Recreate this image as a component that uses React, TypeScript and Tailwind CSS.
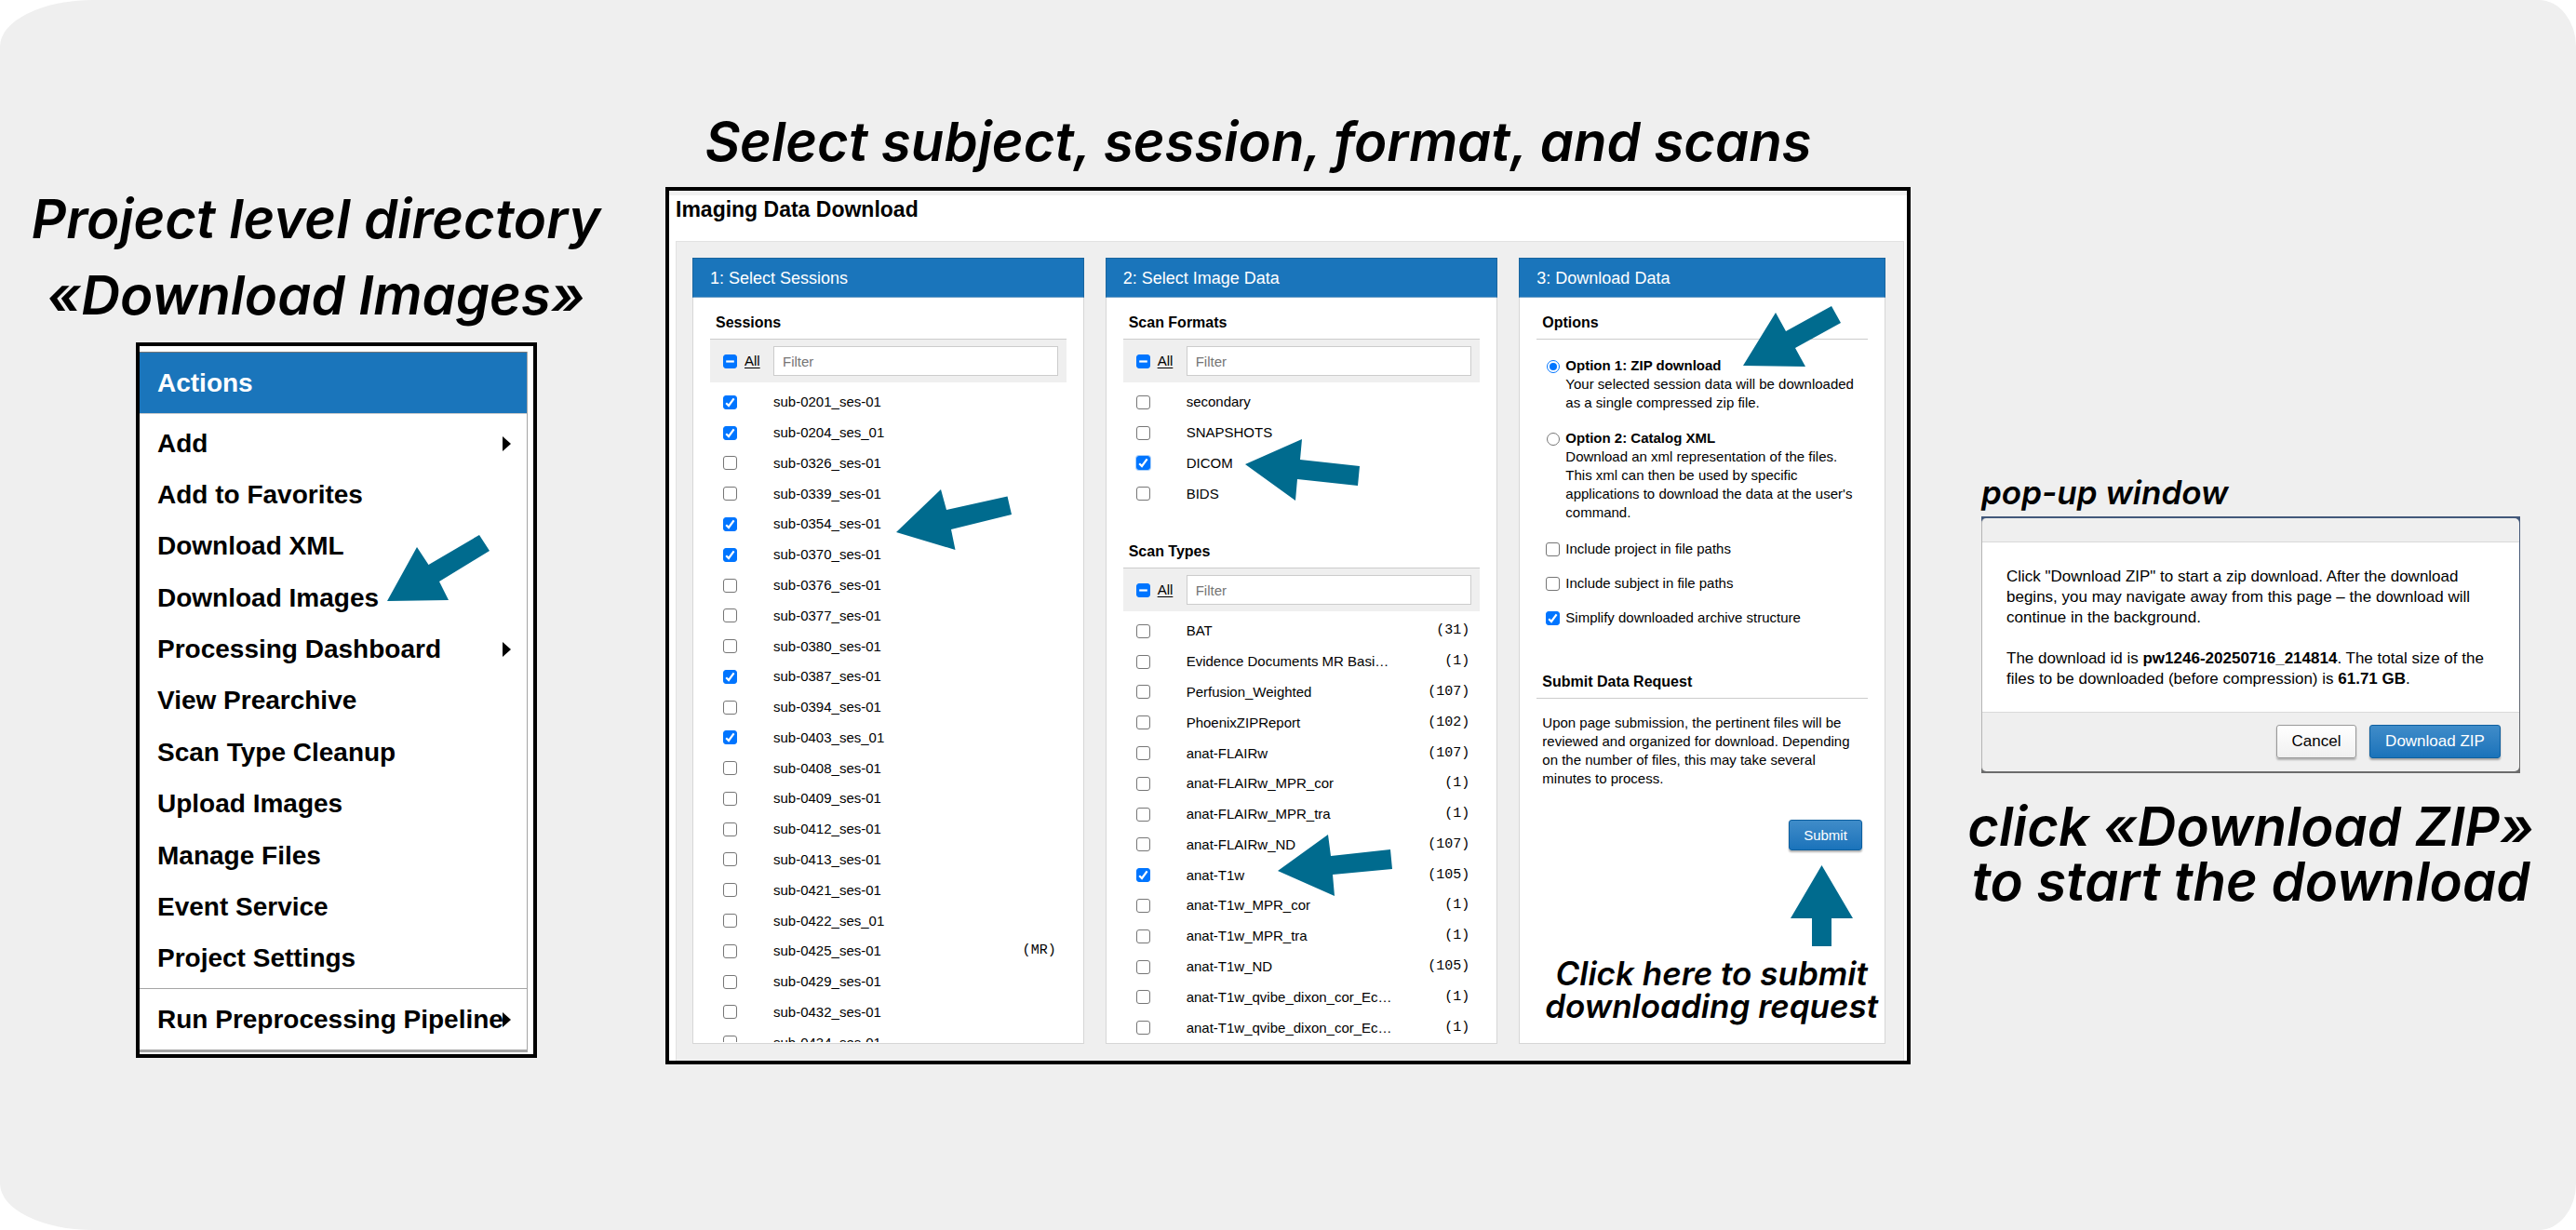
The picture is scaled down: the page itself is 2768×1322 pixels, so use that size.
import { useEffect, useRef, type ReactNode } from "react";

const ARIAL = "font-['Liberation_Sans',Arial,sans-serif]";
const INTER = "font-[Inter,sans-serif] font-semibold italic text-black";

type BoxState = "on" | "off" | "mixed";

function CheckBox({ id, state, label, focused }: { id: string; state: BoxState; label?: string; focused?: boolean }) {
  const ref = useRef<HTMLInputElement>(null);
  useEffect(() => {
    if (ref.current) ref.current.indeterminate = state === "mixed";
  }, [state]);
  return (
    <span className="grid size-[15px] shrink-0 place-items-center">
      <input
        ref={ref}
        id={id}
        type="checkbox"
        aria-label={label}
        defaultChecked={state === "on"}
        className={
          "size-[15px] appearance-none rounded-[3px] border border-[#767676] bg-white [grid-area:1/1] checked:border-[#0075ff] checked:bg-[#0075ff] indeterminate:border-[#0075ff] indeterminate:bg-[#0075ff]" +
          (focused ? " ring-1 ring-[#a9d0fb]" : "")
        }
      />
      {state !== "off" && (
        <svg viewBox="0 0 15 15" className="pointer-events-none size-[15px] [grid-area:1/1]" fill="none" stroke="#fff" strokeWidth="2.2" aria-hidden="true">
          {state === "on" ? <path d="M3.2 8.2 6 11 11.6 3.4" /> : <path d="M3.2 7.5h8.6" />}
        </svg>
      )}
    </span>
  );
}

function Arrow({ points, w, h, className }: { points: string; w: number; h: number; className?: string }) {
  return (
    <svg width={w} height={h} viewBox={`0 0 ${w} ${h}`} className={className} aria-hidden="true">
      <polygon points={points} fill="#006b8e" />
    </svg>
  );
}

function Triangle() {
  return (
    <svg width="9" height="16" viewBox="0 0 9 16" className="shrink-0" aria-hidden="true">
      <path d="M0 0 9 8 0 16Z" fill="#000" />
    </svg>
  );
}

const MENU: { label: string; sub?: boolean }[] = [
  { label: "Add", sub: true },
  { label: "Add to Favorites" },
  { label: "Download XML" },
  { label: "Download Images" },
  { label: "Processing Dashboard", sub: true },
  { label: "View Prearchive" },
  { label: "Scan Type Cleanup" },
  { label: "Upload Images" },
  { label: "Manage Files" },
  { label: "Event Service" },
  { label: "Project Settings" },
];

function MenuLink({ label, sub }: { label: string; sub?: boolean }) {
  return (
    <a href="#" className="flex h-full items-center justify-between pr-[17px] pl-[19px] whitespace-nowrap">
      <span className="min-w-0">{label}</span>
      {sub && <Triangle />}
    </a>
  );
}

function ActionsMenu() {
  return (
    <div className={`relative ml-[146px] w-[431px] border-4 border-black bg-white pt-1.5 pr-1.5 pb-0.5 text-[28px] leading-8 font-bold text-black ${ARIAL}`}>
      <div className="border-r border-b-[3px] border-[#a5a5a5]">
        <h3 className="flex h-[67px] items-center border-t border-b border-t-[#777] border-b-[#ccc] bg-[#1a75bb] pl-[19px] text-white">Actions</h3>
        <ul className="grid h-[617px] auto-rows-fr py-1">
          {MENU.map((m) => (
            <li key={m.label}>
              <MenuLink {...m} />
            </li>
          ))}
        </ul>
        <div className="h-[66px] border-t border-[#a5a5a5]">
          <MenuLink label="Run Preprocessing Pipeline" sub />
        </div>
      </div>
      <Arrow w={110} h={71} points="0,71 32,13 44.5,32 99,0 110,17 56,50 66,70" className="absolute top-[203px] left-[266px]" />
    </div>
  );
}

function Panel({ title, children }: { title: string; children: ReactNode }) {
  return (
    <section className="relative border border-[#d6d6d6] bg-white">
      <h3 className="-mx-px -mt-px flex h-[43px] items-center border border-[#1a659e] border-b-[#6f9fc6] bg-[#1a75bb] pl-[18px] text-lg leading-6 text-white">{title}</h3>
      <div className="px-[18px]">{children}</div>
    </section>
  );
}

function Heading({ children, className }: { children: ReactNode; className: string }) {
  return <h4 className={`border-b border-[#ccc] pb-[7px] pl-1.5 text-base leading-5 font-bold ${className}`}>{children}</h4>;
}

function FilterBar({ id }: { id: string }) {
  return (
    <div className="flex h-[46px] items-center bg-[#efefef] pr-[9px] pl-3.5">
      <div className="flex w-[54px] shrink-0 items-center gap-2">
        <CheckBox id={`${id}-all`} state="mixed" label="Select all" />
        <a href="#" className="underline underline-offset-2">
          All
        </a>
      </div>
      <input
        type="text"
        placeholder="Filter"
        aria-label="Filter"
        className="h-8 min-w-0 flex-1 border border-[#ccc] bg-white px-[9px] placeholder:text-[#757575]"
      />
    </div>
  );
}

interface Item {
  name: string;
  count?: string;
  on?: boolean;
  focused?: boolean;
}

function Row({ id, item }: { id: string; item: Item }) {
  return (
    <li className="flex items-center pr-[11px] pl-3.5">
      <div className="flex w-[54px] shrink-0 items-center">
        <CheckBox id={id} state={item.on ? "on" : "off"} focused={item.focused} />
      </div>
      <label htmlFor={id} className="flex-1 whitespace-nowrap">
        {item.name}
      </label>
      {item.count && <span className="font-['Liberation_Mono',monospace]">({item.count})</span>}
    </li>
  );
}

const SESSIONS: Item[] = [
  { name: "sub-0201_ses-01", on: true },
  { name: "sub-0204_ses_01", on: true },
  { name: "sub-0326_ses-01" },
  { name: "sub-0339_ses-01" },
  { name: "sub-0354_ses-01", on: true },
  { name: "sub-0370_ses-01", on: true },
  { name: "sub-0376_ses-01" },
  { name: "sub-0377_ses-01" },
  { name: "sub-0380_ses-01" },
  { name: "sub-0387_ses-01", on: true },
  { name: "sub-0394_ses-01" },
  { name: "sub-0403_ses_01", on: true },
  { name: "sub-0408_ses-01" },
  { name: "sub-0409_ses-01" },
  { name: "sub-0412_ses-01" },
  { name: "sub-0413_ses-01" },
  { name: "sub-0421_ses-01" },
  { name: "sub-0422_ses_01" },
  { name: "sub-0425_ses-01", count: "MR" },
  { name: "sub-0429_ses-01" },
  { name: "sub-0432_ses-01" },
  { name: "sub-0434_ses-01" },
];

const FORMATS: Item[] = [{ name: "secondary" }, { name: "SNAPSHOTS" }, { name: "DICOM", on: true, focused: true }, { name: "BIDS" }];

const TYPES: Item[] = [
  { name: "BAT", count: "31" },
  { name: "Evidence Documents MR Basi…", count: "1" },
  { name: "Perfusion_Weighted", count: "107" },
  { name: "PhoenixZIPReport", count: "102" },
  { name: "anat-FLAIRw", count: "107" },
  { name: "anat-FLAIRw_MPR_cor", count: "1" },
  { name: "anat-FLAIRw_MPR_tra", count: "1" },
  { name: "anat-FLAIRw_ND", count: "107" },
  { name: "anat-T1w", count: "105", on: true },
  { name: "anat-T1w_MPR_cor", count: "1" },
  { name: "anat-T1w_MPR_tra", count: "1" },
  { name: "anat-T1w_ND", count: "105" },
  { name: "anat-T1w_qvibe_dixon_cor_Ec…", count: "1" },
  { name: "anat-T1w_qvibe_dixon_cor_Ec…", count: "1" },
];

function RadioOption({ id, title, lines, on }: { id: string; title: string; lines: string[]; on?: boolean }) {
  return (
    <div className="flex gap-1.5 pl-[11px]">
      <span className="grid h-[22px] w-3.5 shrink-0 place-items-center">
        <input
          id={id}
          type="radio"
          name="download-option"
          defaultChecked={on}
          className="size-3.5 appearance-none rounded-full border border-[#767676] bg-white [grid-area:1/1] checked:border-[#0075ff]"
        />
        {on && <span className="pointer-events-none size-2 rounded-full bg-[#0075ff] [grid-area:1/1]" />}
      </span>
      <label htmlFor={id} className="whitespace-nowrap">
        <span className="block font-bold">{title}</span>
        {lines.map((l) => (
          <span key={l} className="block">
            {l}
          </span>
        ))}
      </label>
    </div>
  );
}

function FlagOption({ id, label, on }: { id: string; label: string; on?: boolean }) {
  return (
    <div className="flex items-center gap-1.5 pl-2.5">
      <CheckBox id={id} state={on ? "on" : "off"} />
      <label htmlFor={id}>{label}</label>
    </div>
  );
}

const PRIMARY = "rounded-[3px] border border-[#0d5f9f] bg-linear-to-b from-[#3f8cc9] to-[#1a73ba] text-white shadow-[0_2px_2px_rgba(0,0,0,0.3)]";

function DownloadWindow() {
  return (
    <div className={`border-4 border-black bg-white text-black ${ARIAL}`}>
      <div className="border-t-[5px] border-[#f1f1f1]">
        <h3 className="mb-[19px] ml-[7px] text-[23px] leading-[30px] font-bold">Imaging Data Download</h3>
        <div className="mr-[3px] ml-[7px] grid grid-cols-[421fr_422fr_394fr] gap-[23px] border-x border-t border-[#e2e2e2] bg-[#efefef] pt-[17px] pr-[19px] pb-[18px] pl-[17px] text-[15px] leading-5">
          <Panel title="1: Select Sessions">
            <Heading className="pt-[17px]">Sessions</Heading>
            <FilterBar id="sessions" />
            <div className="mt-[5px] h-[704px] overflow-hidden">
              <ul className="grid h-[721px] auto-rows-fr">
                {SESSIONS.map((s) => (
                  <Row key={s.name} id={s.name} item={s} />
                ))}
              </ul>
            </div>
            <Arrow w={124} h={65} points="0,46 48,0 54,22 119.5,7.5 124,27 59,43 63.5,65" className="absolute top-[248px] left-[218px]" />
          </Panel>

          <Panel title="2: Select Image Data">
            <Heading className="pt-[17px]">Scan Formats</Heading>
            <FilterBar id="formats" />
            <ul className="mt-[5px] grid h-[131px] auto-rows-fr">
              {FORMATS.map((f) => (
                <Row key={f.name} id={`format-${f.name}`} item={f} />
              ))}
            </ul>
            <Heading className="pt-9">Scan Types</Heading>
            <FilterBar id="types" />
            <ul className="mt-[5px] grid h-[459px] auto-rows-fr">
              {TYPES.map((t, i) => (
                <Row key={i} id={`type-${i}`} item={t} />
              ))}
            </ul>
            <Arrow w={123} h={66} points="0,27 61,0 59,22 123,29 121,50 56,43 54,66" className="absolute top-[194px] left-[149px]" />
            <Arrow w={123} h={66} points="0,39 54,0 57,23 121,16 123,37 59,43 61,66" className="absolute top-[619px] left-[184px]" />
          </Panel>

          <Panel title="3: Download Data">
            <Heading className="pt-[17px]">Options</Heading>
            <div className="mt-[18px] flex flex-col gap-[18px]">
              <RadioOption
                id="zip"
                on
                title="Option 1: ZIP download"
                lines={["Your selected session data will be downloaded", "as a single compressed zip file."]}
              />
              <RadioOption
                id="xml"
                title="Option 2: Catalog XML"
                lines={["Download an xml representation of the files.", "This xml can then be used by specific", "applications to download the data at the user's", "command."]}
              />
            </div>
            <div className="mt-[19px] flex flex-col gap-[17px]">
              <FlagOption id="inc-project" label="Include project in file paths" />
              <FlagOption id="inc-subject" label="Include subject in file paths" />
              <FlagOption id="simplify" label="Simplify downloaded archive structure" on />
            </div>
            <Heading className="pt-[49px]">Submit Data Request</Heading>
            <p className="mt-4 ml-1.5 whitespace-nowrap">
              Upon page submission, the pertinent files will be
              <br />
              reviewed and organized for download. Depending
              <br />
              on the number of files, this may take several
              <br />
              minutes to process.
            </p>
            <div className="mt-[34px] flex justify-end pr-1.5">
              <button type="button" className={`h-[33px] w-[79px] ${PRIMARY}`}>
                Submit
              </button>
            </div>
            <div className="mt-4 flex justify-end pr-4">
              <Arrow w={67} h={87} points="33.5,0 67,57 44,57 44,87 23,87 23,57 0,57" />
            </div>
            <p className={`mt-3 -mr-5 text-center text-[35px] leading-[35px] whitespace-nowrap ${INTER}`}>
              Click here to submit
              <br />
              downloading request
            </p>
            <Arrow w={105} h={65} points="0,64 35,7 46,27 95,0 105,18 56,45 67,65" className="absolute top-[51px] left-[240px]" />
          </Panel>
        </div>
      </div>
    </div>
  );
}

function PopUp() {
  return (
    <div role="dialog" aria-label="Download ZIP" className={`bg-linear-to-b from-[#42587a] to-[#6c6c6c] pt-0.5 pr-px pb-0.5 text-[17px] leading-[22px] text-black ${ARIAL}`}>
      <div className="rounded-[5px] border-l border-[#b5b5b5] bg-[#efefef]">
        <div className="h-[26px] border-b border-[#d9d9d9]" />
        <div className="bg-white pt-[26px] pb-6 pl-[26px] whitespace-nowrap">
          <p>
            Click "Download ZIP" to start a zip download. After the download
            <br />
            begins, you may navigate away from this page – the download will
            <br />
            continue in the background.
          </p>
          <p className="mt-[22px]">
            The download id is <b>pw1246-20250716_214814</b>. The total size of the
            <br />
            files to be downloaded (before compression) is <b>61.71 GB</b>.
          </p>
        </div>
        <div className="flex justify-end gap-3.5 border-t border-[#d9d9d9] pt-[13px] pr-5 pb-3.5">
          <button type="button" className="h-9 w-[86px] rounded-[3px] border border-[#999] bg-linear-to-b from-white to-[#f0f0f0] shadow-[0_2px_2px_rgba(0,0,0,0.25)]">
            Cancel
          </button>
          <button type="button" className={`h-9 w-[141px] ${PRIMARY}`}>
            Download ZIP
          </button>
        </div>
      </div>
    </div>
  );
}

export default function App() {
  return (
    <div className="bg-white">
      <main className="grid min-h-screen grid-cols-[715fr_1338fr_715fr] items-start rounded-tl-[100px_50px] rounded-tr-[40px_50px] rounded-br-[40px_50px] rounded-bl-[100px_50px] bg-[#efefef]">
        <section className="pt-[194px]">
          <h2 className={`mb-2.5 pr-9 text-center text-[58px] leading-[82px] whitespace-nowrap ${INTER}`}>
            Project level directory
            <br />
            «Download Images»
          </h2>
          <ActionsMenu />
        </section>

        <section className="pt-[117px]">
          <h2 className={`mb-3.5 pr-16 text-center text-[58px] leading-[70px] whitespace-nowrap ${INTER}`}>Select subject, session, format, and scans</h2>
          <DownloadWindow />
        </section>

        <section className="pt-[508px] pr-[60px] pl-[76px]">
          <h2 className={`mb-[5px] text-[35px] leading-[42px] whitespace-nowrap ${INTER}`}>pop-up window</h2>
          <PopUp />
          <p className={`-mx-6 mt-7 text-center text-[58px] leading-[59px] whitespace-nowrap ${INTER}`}>
            click «Download ZIP»
            <br />
            to start the download
          </p>
        </section>
      </main>
    </div>
  );
}
